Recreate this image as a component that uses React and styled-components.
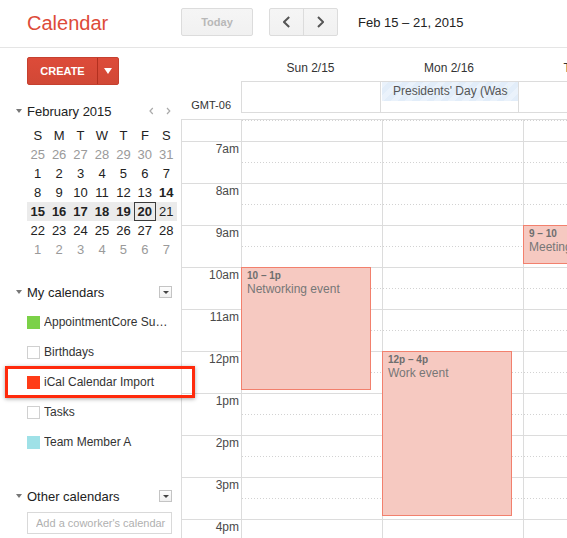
import React from 'react';
import styled, { createGlobalStyle } from 'styled-components';

const GlobalStyle = createGlobalStyle`
  html, body { margin: 0; padding: 0; height: 100%; overflow: hidden; background: #fff; }
  body { font-family: "Liberation Sans", Arial, Helvetica, sans-serif; color: #222; }
  #root { height: 100%; }
  *, *::before, *::after { box-sizing: border-box; }
`;

const Page = styled.div`
  display: flex;
  flex-direction: column;
  height: 100%;
  width: 100%;
`;

const TopBar = styled.header`
  display: flex;
  align-items: flex-start;
  height: 48px;
  padding-top: 8px;
  border-bottom: 1px solid #e5e5e5;
  flex-shrink: 0;
`;

const Logo = styled.div`
  width: 181px;
  padding-left: 27px;
  font-size: 20px;
  line-height: 30px;
  color: #dd4b39;
  flex-shrink: 0;
`;

const ToolButton = styled.button`
  height: 28px;
  width: ${p => p.$w}px;
  margin: 0;
  padding: 0;
  border: 1px solid #dcdcdc;
  border-radius: 2px;
  background: linear-gradient(#f5f5f5, #f1f1f1);
  color: #b8b8b8;
  font-family: inherit;
  font-size: 11px;
  font-weight: bold;
  display: flex;
  align-items: center;
  justify-content: center;
`;

const NavGroup = styled.div`
  display: flex;
  width: 69px;
  margin-left: 16px;
  height: 28px;
  border: 1px solid #dcdcdc;
  border-radius: 2px;
  background: linear-gradient(#f5f5f5, #f1f1f1);
`;

const NavHalf = styled.div`
  flex: 1;
  display: flex;
  align-items: center;
  justify-content: center;
  border-left: ${p => (p.$divider ? '1px solid #dcdcdc' : 'none')};
`;

const DateRange = styled.div`
  margin-left: 20px;
  font-size: 13px;
  line-height: 30px;
  color: #222;
`;

const Content = styled.div`
  display: flex;
  flex: 1;
  min-height: 0;
`;

const Sidebar = styled.aside`
  width: 181px;
  flex-shrink: 0;
  padding: 0 9px 0 27px;
  position: relative;
  z-index: 2;
`;

const CreateButton = styled.div`
  display: flex;
  width: 92px;
  height: 28px;
  margin-top: 9px;
  background: linear-gradient(#dd4b39, #d14836);
  border: 1px solid #c6402f;
  border-radius: 2px;
  color: #fff;
`;

const CreateLabel = styled.div`
  flex: 1;
  display: flex;
  align-items: center;
  justify-content: center;
  font-size: 11px;
  font-weight: bold;
`;

const CreateArrow = styled.div`
  width: 21px;
  display: flex;
  align-items: center;
  justify-content: center;
  border-left: 1px solid #b3301f;
`;

const Triangle = styled.span`
  width: 0;
  height: 0;
  border-left: ${p => p.$w / 2}px solid transparent;
  border-right: ${p => p.$w / 2}px solid transparent;
  border-top: ${p => p.$h}px solid ${p => p.$color};
`;

const SectionHeader = styled.div`
  display: flex;
  align-items: center;
  height: ${p => p.$h}px;
  margin-top: ${p => p.$mt}px;
  margin-left: -17px;
  margin-right: ${p => p.$mr || 0}px;
  font-size: 13px;
  color: #222;
`;

const Toggle = styled.div`
  width: 17px;
  display: flex;
  justify-content: center;
  align-items: center;
`;

const SectionTitle = styled.div`
  flex: 1;
`;

const MiniNavButton = styled.div`
  width: 17px;
  height: 14px;
  display: flex;
  align-items: center;
  justify-content: center;
`;

const DropBox = styled.div`
  width: 13px;
  height: 12px;
  border: 1px solid #c4c4c4;
  background: linear-gradient(#fdfdfd, #f0f0f0);
  display: flex;
  align-items: center;
  justify-content: center;
`;

const MiniGrid = styled.div`
  width: 150px;
  margin-top: 5px;
  font-size: 13px;
`;

const WeekRow = styled.div`
  display: grid;
  grid-template-columns: repeat(7, 1fr);
  height: 19px;
  background: ${p => (p.$current ? '#ebebeb' : 'transparent')};
`;

const DayCell = styled.div`
  text-align: center;
  line-height: ${p => (p.$today ? 17 : 19)}px;
  color: ${p => (p.$muted ? '#9a9a9a' : '#222')};
  font-weight: ${p => (p.$bold ? 'bold' : 'normal')};
  border: ${p => (p.$today ? '1px solid #3c3c3c' : 'none')};
`;

const CalItem = styled.div`
  position: relative;
  display: flex;
  align-items: center;
  gap: 4px;
  height: 30px;
  font-size: 12px;
  color: #333;
`;

const Swatch = styled.span`
  width: 13px;
  height: 13px;
  flex-shrink: 0;
  background: ${p => p.$color || '#fff'};
  border: ${p => (p.$color ? 'none' : '1px solid #d0d0d0')};
`;

const ItemName = styled.span`
  width: 128px;
  white-space: nowrap;
  overflow: hidden;
  text-overflow: ellipsis;
`;

const Highlight = styled.div`
  position: absolute;
  left: -22px;
  top: -1px;
  width: 190px;
  height: 32px;
  border: 3px solid #ff2a0c;
  box-shadow: 0 1px 4px rgba(0, 0, 0, 0.35);
  pointer-events: none;
`;

const CoworkerInput = styled.input`
  display: block;
  width: 145px;
  height: 22px;
  margin-top: 1px;
  padding: 0 1px 0 8px;
  border: 1px solid #d9d9d9;
  font-family: inherit;
  font-size: 11px;
  outline: none;
  &::placeholder { color: #b0b0b0; }
`;

const Main = styled.main`
  flex: 1;
  min-width: 0;
  display: flex;
  flex-direction: column;
  overflow: hidden;
`;

const HeaderGrid = styled.div`
  display: grid;
  grid-template-columns: 60px 139px 138px 138px;
  width: max-content;
  flex-shrink: 0;
`;

const DayLabel = styled.div`
  height: 33px;
  padding-top: 13px;
  line-height: 14px;
  font-size: 12px;
  text-align: center;
  color: #333;
  white-space: nowrap;
`;

const GmtCell = styled.div`
  display: flex;
  align-items: flex-end;
  justify-content: flex-end;
  padding: 0 10px 1px 0;
  font-size: 11px;
  line-height: 13px;
  color: #333;
`;

const AllDayCell = styled.div`
  height: 32px;
  border-top: 1px solid #dcdcdc;
  border-bottom: 1px solid #dcdcdc;
  border-left: 1px solid #dcdcdc;
`;

const Chip = styled.div`
  width: 136px;
  height: 19px;
  margin-left: 1px;
  padding: 0 10px 0 11px;
  background: repeating-linear-gradient(-45deg, #e2edf9 0 5px, #eaf2fb 5px 10px);
`;

const ChipText = styled.span`
  display: block;
  overflow: hidden;
  white-space: nowrap;
  font-size: 12px;
  line-height: 19px;
  color: #555;
`;

const TimeGrid = styled.div`
  display: flex;
  width: max-content;
  margin-top: 6px;
  border-top: 1px solid #dcdcdc;
  flex: 1;
  min-height: 0;
`;

const Gutter = styled.div`
  width: 60px;
  flex-shrink: 0;
  border-left: 1px solid #dcdcdc;
`;

const GutterTop = styled.div`
  height: 21px;
`;

const HourLabel = styled.div`
  height: 42px;
  border-top: 1px solid #dcdcdc;
  padding-right: 2px;
  text-align: right;
  font-size: 12px;
  line-height: 14px;
  color: #4a4a4a;
`;

const DayColumn = styled.div`
  position: relative;
  width: 141px;
  flex-shrink: 0;
  border-left: 1px solid #dcdcdc;
`;

const dots = `
  background-image: repeating-linear-gradient(to right, #d2d2d2 0 1px, transparent 1px 3px);
  background-size: 100% 1px;
  background-repeat: no-repeat;
`;

const HalfSlot = styled.div`
  height: 21px;
  ${dots}
  background-position: 0 0;
`;

const HourSlot = styled.div`
  position: relative;
  height: 42px;
  border-top: 1px solid #dcdcdc;
  &::after {
    content: '';
    position: absolute;
    left: 0;
    right: 0;
    top: 20px;
    height: 1px;
    ${dots}
  }
`;

const EventBlock = styled.div`
  position: absolute;
  left: -1px;
  top: ${p => p.$top}px;
  height: ${p => p.$height}px;
  width: 130px;
  padding: 2px 5px;
  background: #f6c9c1;
  border: 1px solid #f2806d;
  overflow: hidden;
  z-index: 1;
`;

const EventTime = styled.div`
  font-size: 10px;
  font-weight: bold;
  line-height: 12px;
  color: #6e6e6e;
  white-space: nowrap;
`;

const EventTitle = styled.div`
  font-size: 12px;
  line-height: 14px;
  color: #777;
  white-space: nowrap;
`;

const Chevron = ({ dir, size = 12, color = '#555', stroke = 2 }) => {
  const w = size * 0.6;
  const pts = dir === 'left'
    ? `${w - 1},1 1,${size / 2} ${w - 1},${size - 1}`
    : `1,1 ${w - 1},${size / 2} 1,${size - 1}`;
  return (
    <svg width={w} height={size} viewBox={`0 0 ${w} ${size}`}>
      <polyline points={pts} fill="none" stroke={color} strokeWidth={stroke} />
    </svg>
  );
};

const range = (a, b) => Array.from({ length: b - a + 1 }, (_, i) => a + i);

const weeks = [
  { days: range(25, 31).map(d => ({ d, muted: true })) },
  { days: range(1, 7).map(d => ({ d })) },
  { days: range(8, 14).map(d => ({ d, bold: d === 14 })) },
  { current: true, days: range(15, 21).map(d => ({ d, bold: d <= 20, today: d === 20 })) },
  { days: range(22, 28).map(d => ({ d })) },
  { days: range(1, 7).map(d => ({ d, muted: true })) },
];

const calendars = [
  { name: 'AppointmentCore Support', color: '#7bd148' },
  { name: 'Birthdays' },
  { name: 'iCal Calendar Import', color: '#ff3c18', highlight: true },
  { name: 'Tasks' },
  { name: 'Team Member A', color: '#9fe1e7' },
];

const hours = ['7am', '8am', '9am', '10am', '11am', '12pm', '1pm', '2pm', '3pm', '4pm'];

const slotTop = h => 21 + (h - 7) * 42;

const columns = [
  { events: [{ start: 10, end: 13, time: '10 – 1p', title: 'Networking event' }] },
  { events: [{ start: 12, end: 16, time: '12p – 4p', title: 'Work event' }] },
  { events: [{ start: 9, end: 10, time: '9 – 10', title: 'Meeting' }] },
];

export default function App() {
  return (
    <Page>
      <GlobalStyle />
      <TopBar>
        <Logo>Calendar</Logo>
        <ToolButton $w={72}>Today</ToolButton>
        <NavGroup>
          <NavHalf><Chevron dir="left" /></NavHalf>
          <NavHalf $divider><Chevron dir="right" /></NavHalf>
        </NavGroup>
        <DateRange>Feb 15 – 21, 2015</DateRange>
      </TopBar>
      <Content>
        <Sidebar>
          <CreateButton>
            <CreateLabel>CREATE</CreateLabel>
            <CreateArrow><Triangle $w={8} $h={6} $color="#fff" /></CreateArrow>
          </CreateButton>

          <SectionHeader $h={20} $mt={16} $mr={-5}>
            <Toggle><Triangle $w={7} $h={4} $color="#777" /></Toggle>
            <SectionTitle>February 2015</SectionTitle>
            <MiniNavButton><Chevron dir="left" size={8} color="#aaa" stroke={1.2} /></MiniNavButton>
            <MiniNavButton><Chevron dir="right" size={8} color="#aaa" stroke={1.2} /></MiniNavButton>
          </SectionHeader>

          <MiniGrid>
            <WeekRow>
              {['S', 'M', 'T', 'W', 'T', 'F', 'S'].map((l, i) => (
                <DayCell key={i}>{l}</DayCell>
              ))}
            </WeekRow>
            {weeks.map((w, i) => (
              <WeekRow key={i} $current={w.current}>
                {w.days.map(c => (
                  <DayCell key={c.d} $muted={c.muted} $bold={c.bold} $today={c.today}>{c.d}</DayCell>
                ))}
              </WeekRow>
            ))}
          </MiniGrid>

          <SectionHeader $h={30} $mt={18}>
            <Toggle><Triangle $w={7} $h={4} $color="#777" /></Toggle>
            <SectionTitle>My calendars</SectionTitle>
            <DropBox><Triangle $w={6} $h={3} $color="#444" /></DropBox>
          </SectionHeader>

          {calendars.map(c => (
            <CalItem key={c.name}>
              <Swatch $color={c.color} />
              <ItemName>{c.name}</ItemName>
              {c.highlight && <Highlight />}
            </CalItem>
          ))}

          <SectionHeader $h={30} $mt={24}>
            <Toggle><Triangle $w={7} $h={4} $color="#777" /></Toggle>
            <SectionTitle>Other calendars</SectionTitle>
            <DropBox><Triangle $w={6} $h={3} $color="#444" /></DropBox>
          </SectionHeader>
          <CoworkerInput placeholder="Add a coworker's calendar" />
        </Sidebar>

        <Main>
          <HeaderGrid>
            <div />
            <DayLabel>Sun 2/15</DayLabel>
            <DayLabel>Mon 2/16</DayLabel>
            <DayLabel>Tue 2/17</DayLabel>
            <GmtCell>GMT-06</GmtCell>
            <AllDayCell />
            <AllDayCell>
              <Chip><ChipText>Presidents' Day (Washington's Birthday)</ChipText></Chip>
            </AllDayCell>
            <AllDayCell />
          </HeaderGrid>

          <TimeGrid>
            <Gutter>
              <GutterTop />
              {hours.map(h => <HourLabel key={h}>{h}</HourLabel>)}
            </Gutter>
            {columns.map((col, i) => (
              <DayColumn key={i}>
                <HalfSlot />
                {hours.map(h => <HourSlot key={h} />)}
                {col.events.map(ev => (
                  <EventBlock key={ev.title} $top={slotTop(ev.start)} $height={(ev.end - ev.start) * 42 - 3}>
                    <EventTime>{ev.time}</EventTime>
                    <EventTitle>{ev.title}</EventTitle>
                  </EventBlock>
                ))}
              </DayColumn>
            ))}
          </TimeGrid>
        </Main>
      </Content>
    </Page>
  );
}
